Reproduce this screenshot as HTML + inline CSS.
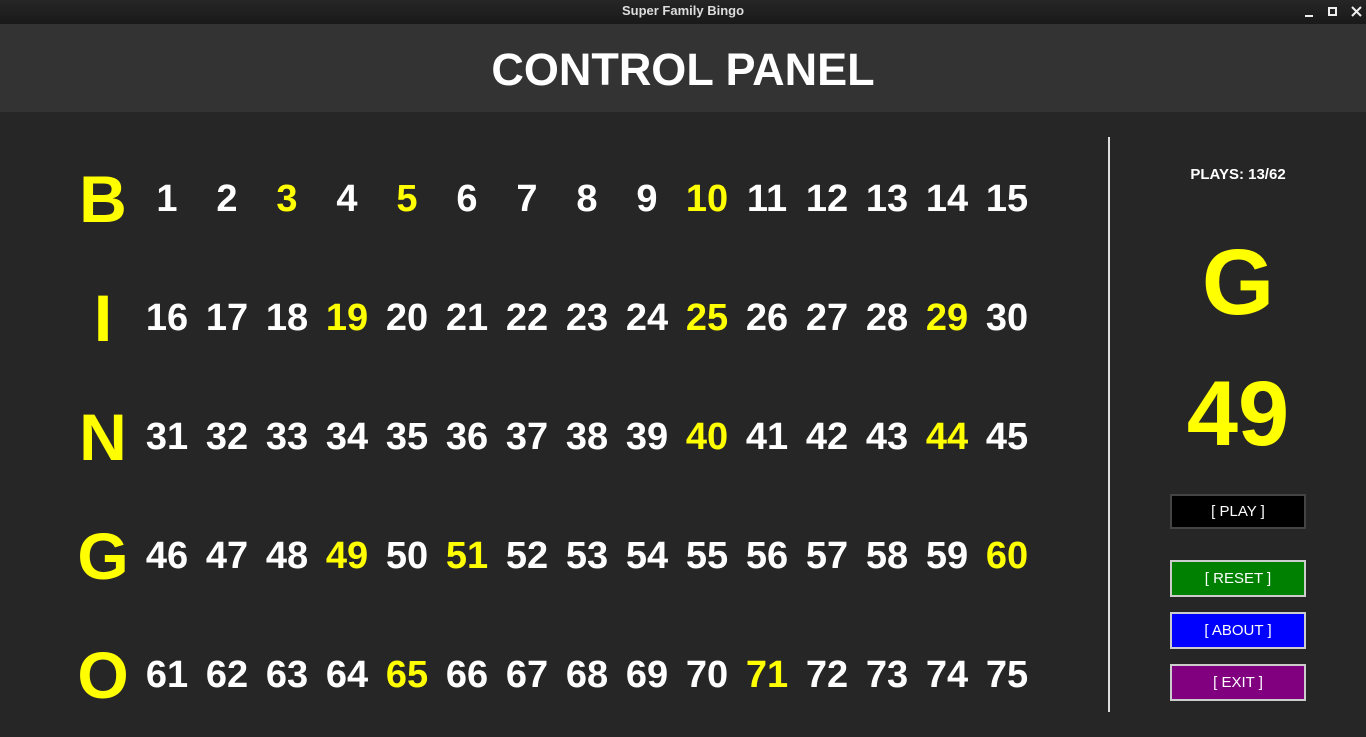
<!DOCTYPE html>
<html><head><meta charset="utf-8"><style>
*{margin:0;padding:0;box-sizing:border-box}
body{width:1366px;height:737px;background:#262626;font-family:"Liberation Sans","DejaVu Sans",sans-serif;position:relative;overflow:hidden}
.tb{position:absolute;left:0;top:0;width:1366px;height:24px;background:linear-gradient(#262626,#191919);color:#ddd;font-size:13px;font-weight:bold;text-align:center;line-height:22px}
.hd{position:absolute;left:0;top:24px;width:1366px;height:88px;background:#333;color:#fff;font-weight:bold;font-size:45px;text-align:center;line-height:92px}
.c{position:absolute;width:60px;text-align:center;font-weight:bold;font-size:38px;color:#fff;line-height:40px;height:40px}
.y{color:#ff0}
.L{position:absolute;width:80px;text-align:center;font-weight:bold;font-size:66px;color:#ff0;line-height:70px}
.sep{position:absolute;left:1108px;top:137px;width:2px;height:575px;background:#ddd}
.btn{position:absolute;left:1170px;width:136px;color:#fff;font-size:15px;text-align:center;border:2px solid #ccc}
</style></head><body>
<div class="tb">Super Family Bingo
<svg style="position:absolute;left:1300px;top:4px" width="66" height="16" viewBox="0 0 66 16"><rect x="5" y="11" width="8" height="2" fill="#eee"/><rect x="29" y="4" width="7" height="7" fill="none" stroke="#eee" stroke-width="2"/><path d="M52 3L61 12M61 3L52 12" stroke="#eee" stroke-width="2"/></svg></div>
<div class="hd">CONTROL PANEL</div>
<div class="sep"></div>
<div id="g"></div>
<div style="position:absolute;left:1138px;width:200px;top:166px;text-align:center;color:#fff;font-weight:bold;font-size:15px">PLAYS: 13/62</div>
<div style="position:absolute;left:1138px;width:200px;top:232px;text-align:center;color:#ff0;font-weight:bold;font-size:93px;line-height:100px">G</div>
<div style="position:absolute;left:1138px;width:200px;top:364px;text-align:center;color:#ff0;font-weight:bold;font-size:92px;line-height:100px">49</div>
<div class="btn" style="top:494px;height:35px;line-height:31px;background:#000;border-color:#444">[ PLAY ]</div>
<div class="btn" style="top:560px;height:37px;line-height:33px;background:#008000">[ RESET ]</div>
<div class="btn" style="top:612px;height:37px;line-height:33px;background:#00f">[ ABOUT ]</div>
<div class="btn" style="top:664px;height:37px;line-height:33px;background:#800080">[ EXIT ]</div>
<script>
var Y=[3,5,10,19,25,29,40,44,49,51,60,65,71],L="BINGO",h="";
for(var r=0;r<5;r++){var cy=199+119*r;
h+='<div class="L" style="left:63px;top:'+(cy-35)+'px">'+L[r]+'</div>';
for(var i=0;i<15;i++){var n=r*15+i+1;
h+='<div class="c'+(Y.indexOf(n)>=0?' y':'')+'" style="left:'+(137+60*i)+'px;top:'+(cy-20)+'px">'+n+'</div>';}}
document.getElementById('g').innerHTML=h;
</script>
</body></html>
